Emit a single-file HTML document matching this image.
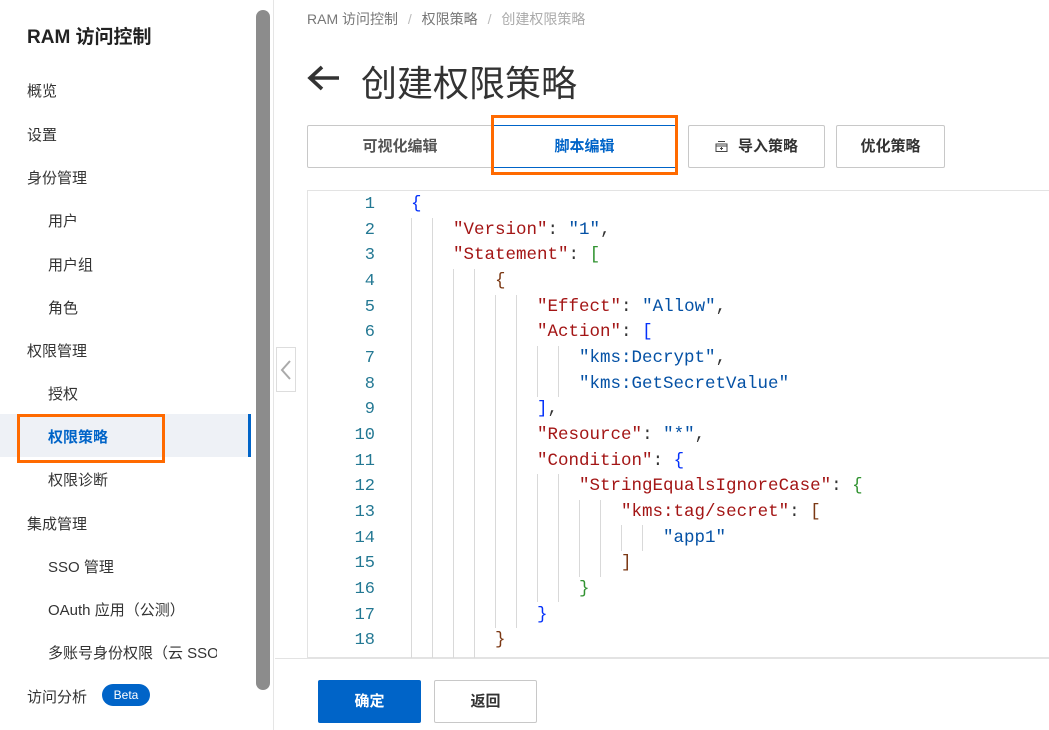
<!DOCTYPE html>
<html><head><meta charset="utf-8"><style>
*{box-sizing:border-box;margin:0;padding:0}
body{width:1049px;height:730px;overflow:hidden;background:#fff;font-family:"Liberation Sans","Noto Sans CJK SC",sans-serif;color:#333;position:relative}
.a{position:absolute}
.side{left:0;top:0;width:274px;height:730px;background:#fff;border-right:1px solid #e5e5e5}
.nav{position:absolute;font-size:15px;color:#333;white-space:nowrap}
.code{font-family:"Liberation Mono",monospace;font-size:17.5px;white-space:pre;position:absolute;left:411px;line-height:25.65px;top:192px}
.ln{position:absolute;left:330px;width:45px;text-align:right;font-family:"Liberation Mono",monospace;font-size:17px;color:#237893;line-height:25.65px;top:192px;white-space:pre}
.k{color:#a31515}.s{color:#0451a5}.b1{color:#0431fa}.b2{color:#319331}.b3{color:#7b3814}.p{color:#333}
.g{position:absolute;width:1px;background:#d9d9d9}
.btn{position:absolute;border:1px solid #c8c8c8;border-radius:2px;font-size:15px;font-weight:bold;text-align:center;color:#333;background:#fff}
</style></head><body>
<div class="a side"></div>
<div class="a" style="left:256px;top:10px;width:14px;height:680px;background:#8c8c8c;border-radius:7px"></div>
<div class="nav" style="left:27px;top:22px;font-size:19px;font-weight:bold;color:#222">RAM 访问控制</div>
<div class="nav" style="left:27px;top:80px">概览</div>
<div class="nav" style="left:27px;top:124px">设置</div>
<div class="nav" style="left:27px;top:167px">身份管理</div>
<div class="nav" style="left:48px;top:210px">用户</div>
<div class="nav" style="left:48px;top:254px">用户组</div>
<div class="nav" style="left:48px;top:297px">角色</div>
<div class="nav" style="left:27px;top:340px">权限管理</div>
<div class="nav" style="left:48px;top:383px">授权</div>
<div class="a" style="left:0;top:414px;width:251px;height:43px;background:#eef1f6"></div>
<div class="a" style="left:248px;top:414px;width:3px;height:43px;background:#0064c8"></div>
<div class="nav" style="left:48px;top:426px;color:#0064c8;font-weight:bold">权限策略</div>
<div class="a" style="left:17px;top:414px;width:148px;height:49px;border:3px solid #ff6a00"></div>
<div class="nav" style="left:48px;top:469px">权限诊断</div>
<div class="nav" style="left:27px;top:513px">集成管理</div>
<div class="nav" style="left:48px;top:556px">SSO 管理</div>
<div class="nav" style="left:48px;top:599px">OAuth 应用（公测）</div>
<div class="nav" style="left:48px;top:642px;width:169px;overflow:hidden">多账号身份权限（云 SSO）</div>
<div class="nav" style="left:27px;top:686px">访问分析</div>
<div class="a" style="left:102px;top:684px;width:48px;height:22px;border-radius:11px;background:#0064c8;color:#fff;font-size:12px;text-align:center;line-height:22px">Beta</div>

<div class="a" style="left:307px;top:9px;font-size:14px;color:#777">RAM 访问控制 <span style="color:#bbb;margin:0 6px">/</span> 权限策略 <span style="color:#bbb;margin:0 6px">/</span> <span style="color:#aaa">创建权限策略</span></div>
<svg class="a" style="left:306px;top:64px" width="36" height="28" viewBox="0 0 36 28"><path d="M33 14H5M16 3L4 14l12 11" stroke="#333" stroke-width="3.6" fill="none"/></svg>
<div class="a" style="left:361px;top:55px;font-size:36px;color:#333">创建权限策略</div>

<div class="btn" style="left:307px;top:125px;width:186px;height:43px;line-height:41px;color:#555">可视化编辑</div>
<div class="btn" style="left:492px;top:125px;width:185px;height:43px;line-height:41px;color:#0064c8;border:1px solid #0064c8">脚本编辑</div>
<div class="a" style="left:491px;top:115px;width:187px;height:60px;border:3px solid #ff6a00"></div>
<div class="btn" style="left:688px;top:125px;width:137px;height:43px;line-height:41px">
<svg width="13" height="11" viewBox="0 0 13 11" style="vertical-align:-1px;margin-right:10px"><path d="M3 .5h7M1 3h11v7.5H1zM1 5h11M6.5 6v3M5 7.5h3" stroke="#444" stroke-width="1" fill="none"/></svg>导入策略</div>
<div class="btn" style="left:836px;top:125px;width:109px;height:43px;line-height:41px">优化策略</div>

<div class="a" style="left:307px;top:190px;width:742px;height:468px;border:1px solid #e3e3e3;border-right:none;background:#fff"></div>
<div class="a" style="left:276px;top:347px;width:20px;height:45px;border:1px solid #ddd;background:#fff"></div>
<svg class="a" style="left:279px;top:359px" width="14" height="22"><path d="M11 2L3 11l8 9" stroke="#aaa" stroke-width="2" fill="none"/></svg>

<div class="ln">1
2
3
4
5
6
7
8
9
10
11
12
13
14
15
16
17
18</div>
<div class="g" style="left:411px;top:218px;height:440px"></div>
<div class="g" style="left:432px;top:218px;height:440px"></div>
<div class="g" style="left:453px;top:269px;height:389px"></div>
<div class="g" style="left:474px;top:269px;height:389px"></div>
<div class="g" style="left:495px;top:295px;height:333px"></div>
<div class="g" style="left:516px;top:295px;height:333px"></div>
<div class="g" style="left:537px;top:346px;height:51px"></div>
<div class="g" style="left:558px;top:346px;height:51px"></div>
<div class="g" style="left:537px;top:474px;height:128px"></div>
<div class="g" style="left:558px;top:474px;height:128px"></div>
<div class="g" style="left:579px;top:500px;height:77px"></div>
<div class="g" style="left:600px;top:500px;height:77px"></div>
<div class="g" style="left:621px;top:525px;height:26px"></div>
<div class="g" style="left:642px;top:525px;height:26px"></div>
<div class="code"><span class="b1">{</span>
    <span class="k">"Version"</span><span class="p">: </span><span class="s">"1"</span><span class="p">,</span>
    <span class="k">"Statement"</span><span class="p">: </span><span class="b2">[</span>
        <span class="b3">{</span>
            <span class="k">"Effect"</span><span class="p">: </span><span class="s">"Allow"</span><span class="p">,</span>
            <span class="k">"Action"</span><span class="p">: </span><span class="b1">[</span>
                <span class="s">"kms:Decrypt"</span><span class="p">,</span>
                <span class="s">"kms:GetSecretValue"</span>
            <span class="b1">]</span><span class="p">,</span>
            <span class="k">"Resource"</span><span class="p">: </span><span class="s">"*"</span><span class="p">,</span>
            <span class="k">"Condition"</span><span class="p">: </span><span class="b1">{</span>
                <span class="k">"StringEqualsIgnoreCase"</span><span class="p">: </span><span class="b2">{</span>
                    <span class="k">"kms:tag/secret"</span><span class="p">: </span><span class="b3">[</span>
                        <span class="s">"app1"</span>
                    <span class="b3">]</span>
                <span class="b2">}</span>
            <span class="b1">}</span>
        <span class="b3">}</span></div>
<div class="a" style="left:275px;top:658px;width:774px;height:72px;background:#fff;border-top:1px solid #e3e3e3"></div>
<div class="btn" style="left:318px;top:680px;width:103px;height:43px;line-height:43px;background:#0064c8;border:none;color:#fff">确定</div>
<div class="btn" style="left:434px;top:680px;width:103px;height:43px;line-height:41px">返回</div>
</body></html>
